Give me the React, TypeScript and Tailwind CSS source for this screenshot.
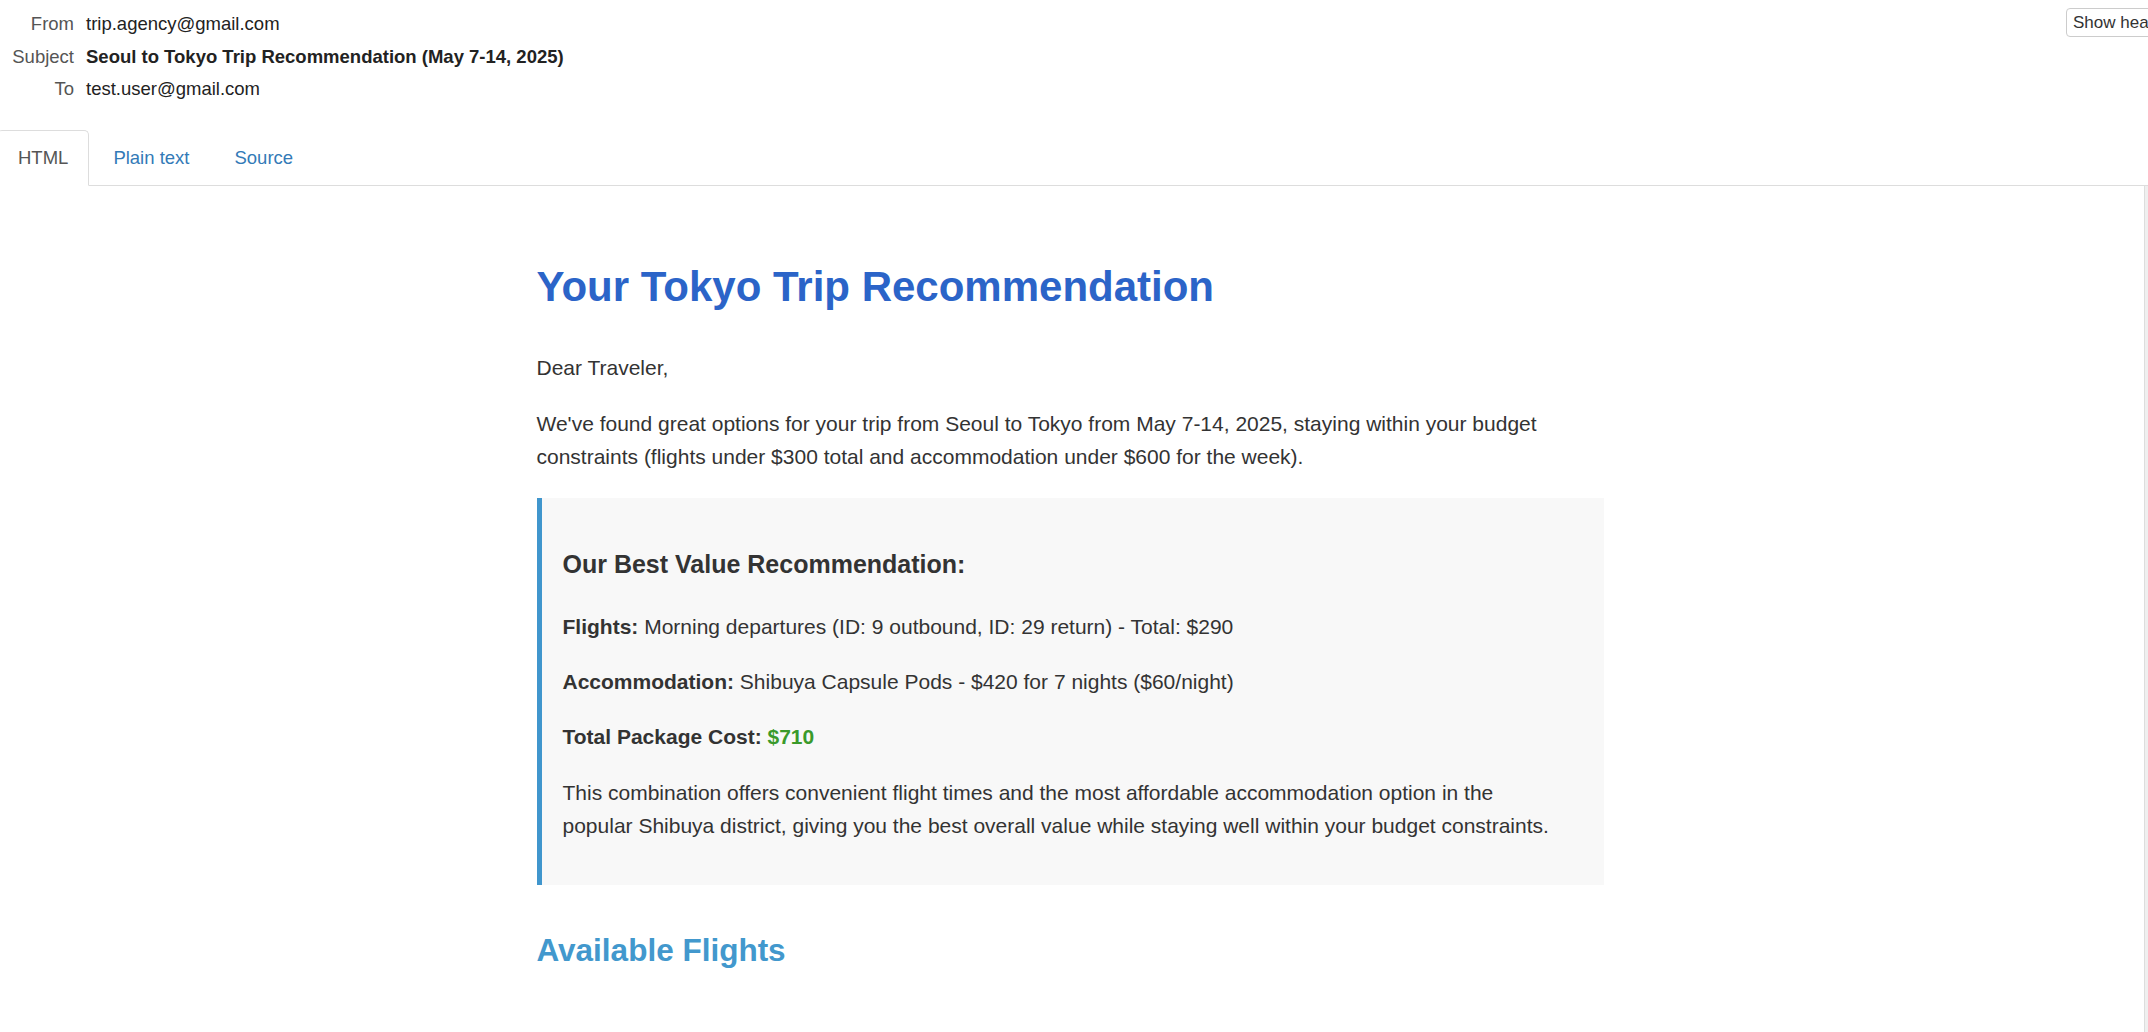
const headerRows = [
  { label: "From", value: "trip.agency@gmail.com", bold: false },
  { label: "Subject", value: "Seoul to Tokyo Trip Recommendation (May 7-14, 2025)", bold: true },
  { label: "To", value: "test.user@gmail.com", bold: false },
];

const tabs = ["HTML", "Plain text", "Source"];

const App = () => {
  return (
    <div
      className="relative h-screen w-full overflow-hidden bg-white text-[#333]"
      style={{ fontFamily: '"Liberation Sans", Arial, Helvetica, sans-serif' }}
    >
      {/* message headers */}
      <div className="pt-[8px] text-[18.5px] leading-[32.5px]">
        {headerRows.map((row) => (
          <div key={row.label} className="flex">
            <div className="w-[74px] shrink-0 text-right text-[#555]">{row.label}</div>
            <div className={`ml-[12px] text-[#222] ${row.bold ? "font-bold" : ""}`}>{row.value}</div>
          </div>
        ))}
      </div>

      <button className="absolute left-[2066px] top-[8px] h-[29px] whitespace-nowrap rounded-[4px] border border-[#ccc] bg-white px-[6px] text-[17px] leading-[26px] text-[#333]">
        Show headers
      </button>

      {/* tabs */}
      <div className="mt-[24px] flex border-b border-[#ddd] text-[18.5px] leading-[26px]">
        {tabs.map((tab, i) => (
          <div
            key={tab}
            className={
              i === 0
                ? "-mb-px ml-[-3px] mr-[3px] rounded-t-[5px] border border-[#ddd] border-b-white bg-white px-[20px] py-[14px] text-[#555]"
                : "-mb-px mr-[3px] border border-transparent px-[20px] py-[14px] text-[#337ab7]"
            }
          >
            {tab}
          </div>
        ))}
      </div>

      {/* rendered html body */}
      <div className="flex h-full">
        <div className="flex-1 pr-[4px]">
          <div className="mx-auto w-[1067px] pt-[77px] text-[21px] leading-[33px] text-[#333]">
            <h1 className="text-[42px] font-bold leading-[48px] text-[#2b64c8]">Your Tokyo Trip Recommendation</h1>

            <p className="mt-[40px]">Dear Traveler,</p>
            <p className="mt-[23px]">
              We've found great options for your trip from Seoul to Tokyo from May 7-14, 2025, staying within your budget
              constraints (flights under $300 total and accommodation under $600 for the week).
            </p>

            <div className="mt-[25px] border-l-[5px] border-[#4096cd] bg-[#f8f8f8] pb-[43px] pl-[21px] pr-[40px] pt-[51px]">
              <h3 className="text-[25px] font-bold leading-[30px]">Our Best Value Recommendation:</h3>
              <p className="mt-[31px]">
                <span className="font-bold">Flights:</span> Morning departures (ID: 9 outbound, ID: 29 return) - Total: $290
              </p>
              <p className="mt-[22px]">
                <span className="font-bold">Accommodation:</span> Shibuya Capsule Pods - $420 for 7 nights ($60/night)
              </p>
              <p className="mt-[22px]">
                <span className="font-bold">Total Package Cost:</span>{" "}
                <span className="font-bold text-[#3a9a2b]">$710</span>
              </p>
              <p className="mt-[23px]">
                This combination offers convenient flight times and the most affordable accommodation option in the
                popular Shibuya district, giving you the best overall value while staying well within your budget
                constraints.
              </p>
            </div>

            <h2 className="mt-[47px] text-[31.5px] font-bold leading-[36px] text-[#4298cd]">Available Flights</h2>
          </div>
        </div>
        <div className="w-[4px] shrink-0 border-l border-[#ddd] bg-[#efefef]" />
      </div>
    </div>
  );
};

export default App;
